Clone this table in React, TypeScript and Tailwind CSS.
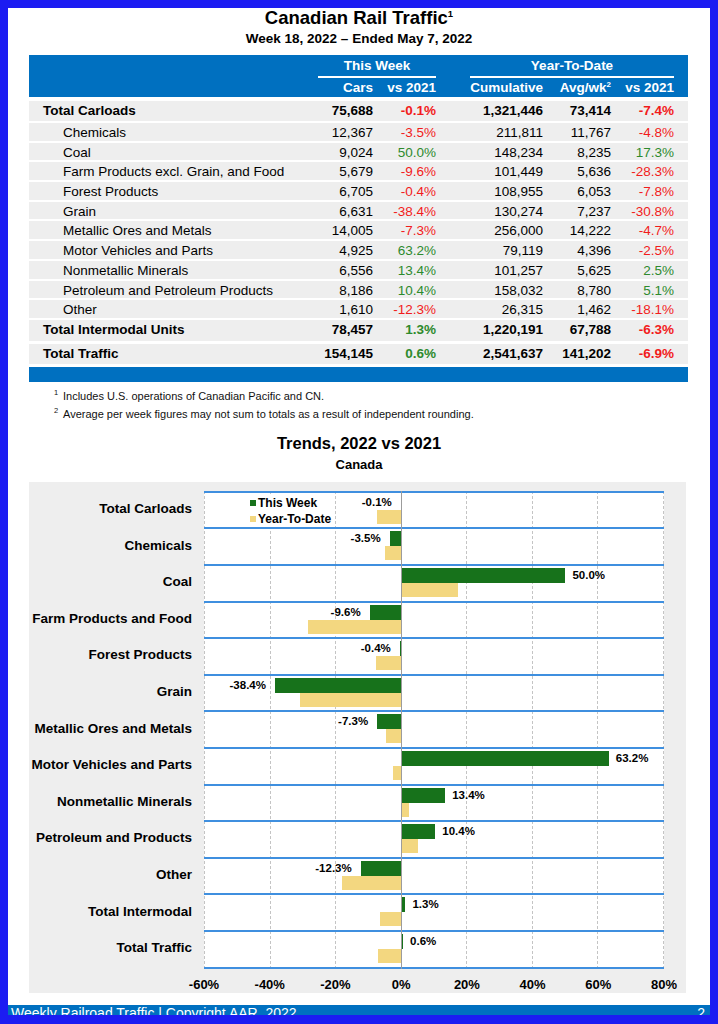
const tableRows = [
  { label: "Total Carloads", cars: "75,688", vs: "-0.1%", cum: "1,321,446", avg: "73,414", ytd: "-7.4%", total: true },
  { label: "Chemicals", cars: "12,367", vs: "-3.5%", cum: "211,811", avg: "11,767", ytd: "-4.8%" },
  { label: "Coal", cars: "9,024", vs: "50.0%", cum: "148,234", avg: "8,235", ytd: "17.3%" },
  { label: "Farm Products excl. Grain, and Food", cars: "5,679", vs: "-9.6%", cum: "101,449", avg: "5,636", ytd: "-28.3%" },
  { label: "Forest Products", cars: "6,705", vs: "-0.4%", cum: "108,955", avg: "6,053", ytd: "-7.8%" },
  { label: "Grain", cars: "6,631", vs: "-38.4%", cum: "130,274", avg: "7,237", ytd: "-30.8%" },
  { label: "Metallic Ores and Metals", cars: "14,005", vs: "-7.3%", cum: "256,000", avg: "14,222", ytd: "-4.7%" },
  { label: "Motor Vehicles and Parts", cars: "4,925", vs: "63.2%", cum: "79,119", avg: "4,396", ytd: "-2.5%" },
  { label: "Nonmetallic Minerals", cars: "6,556", vs: "13.4%", cum: "101,257", avg: "5,625", ytd: "2.5%" },
  { label: "Petroleum and Petroleum Products", cars: "8,186", vs: "10.4%", cum: "158,032", avg: "8,780", ytd: "5.1%" },
  { label: "Other", cars: "1,610", vs: "-12.3%", cum: "26,315", avg: "1,462", ytd: "-18.1%" },
];

const totalRows = [
  { label: "Total Intermodal Units", cars: "78,457", vs: "1.3%", cum: "1,220,191", avg: "67,788", ytd: "-6.3%", total: true },
  { label: "Total Traffic", cars: "154,145", vs: "0.6%", cum: "2,541,637", avg: "141,202", ytd: "-6.9%", total: true },
];

const trends: [string, number, number][] = [
  ["Total Carloads", -0.1, -7.4],
  ["Chemicals", -3.5, -4.8],
  ["Coal", 50.0, 17.3],
  ["Farm Products and Food", -9.6, -28.3],
  ["Forest Products", -0.4, -7.8],
  ["Grain", -38.4, -30.8],
  ["Metallic Ores and Metals", -7.3, -4.7],
  ["Motor Vehicles and Parts", 63.2, -2.5],
  ["Nonmetallic Minerals", 13.4, 2.5],
  ["Petroleum and Products", 10.4, 5.1],
  ["Other", -12.3, -18.1],
  ["Total Intermodal", 1.3, -6.3],
  ["Total Traffic", 0.6, -6.9],
];

const GRID = "grid grid-cols-[289px_55px_63px_34px_73px_68px_63px_15px]";
const PLOT_W = 460;
const SCALE = PLOT_W / 140; // px per percent, -60% .. 80%
const ZERO = 60 * SCALE;

function pctColor(v: string) {
  return v.startsWith("-") ? "text-[#f21b1b]" : "text-[#2d8a2d]";
}

type Row = (typeof tableRows)[number];

function DataRow({ row, height }: { row: Row; height: string }) {
  return (
    <div className={`${GRID} items-center bg-[#eeeeee] ${height} ${row.total ? "font-bold" : ""}`}>
      <div className={row.total ? "pl-[14px]" : "pl-[34px]"}>{row.label}</div>
      <div className="text-right">{row.cars}</div>
      <div className={`text-right ${pctColor(row.vs)}`}>{row.vs}</div>
      <div />
      <div className="text-right">{row.cum}</div>
      <div className="text-right">{row.avg}</div>
      <div className={`text-right ${pctColor(row.ytd)}`}>{row.ytd}</div>
      <div />
    </div>
  );
}

function Bar({ value, top }: { value: number; top: string }) {
  const w = Math.abs(value) * SCALE;
  const left = value >= 0 ? ZERO : ZERO - w;
  return <div className={`absolute ${top}`} style={{ left, width: w }} />;
}

function TrendsChart() {
  return (
    <div className="mt-[8px] ml-[21px] mr-[24px] h-[511px] bg-[#eeeeee] pt-[9px] flex">
      <div className="w-[175px] flex flex-col">
        {trends.map(([label]) => (
          <div key={label} className="h-[36.6px] flex items-center justify-end pr-[12px] text-[13.5px] font-bold">
            {label}
          </div>
        ))}
      </div>
      <div className="w-[460px] flex flex-col">
        <div className="relative bg-white">
          {/* dashed gridlines */}
          <div className="absolute inset-0 flex">
            {[0, 1, 2, 3, 4, 5, 6].map((i) => (
              <div
                key={i}
                className={`flex-1 border-l border-dashed border-[#c4c4c4] ${i === 6 ? "border-r" : ""}`}
              />
            ))}
          </div>

          {trends.map(([label, week, ytd], i) => {
            const w = Math.abs(week) * SCALE;
            return (
              <div
                key={label}
                className={`relative h-[36.6px] border-t-2 border-[#3f8fdf] ${i === trends.length - 1 ? "border-b-2 h-[38.6px]" : ""}`}
              >
                <Bar value={week} top="top-[2px] h-[15px] bg-[#17721b]" />
                <Bar value={ytd} top="top-[17px] h-[14px] bg-[#f3d780]" />
                <div
                  className="absolute top-[2px] leading-[15px] text-[11.5px] font-bold whitespace-nowrap"
                  style={week >= 0 ? { left: ZERO + w + 7 } : { right: PLOT_W - (ZERO - w) + 9 }}
                >
                  {week.toFixed(1)}%
                </div>
              </div>
            );
          })}

          {/* zero axis */}
          <div className="absolute top-0 bottom-0 w-[1.5px] bg-[#9c9c9c]" style={{ left: ZERO - 0.5 }} />

          {/* legend */}
          <div className="absolute left-[46px] top-[4px] bg-white text-[12px] font-bold leading-[16px]">
            <div className="flex items-center gap-[2px]">
              <span className="w-[6px] h-[6px] bg-[#17721b]" />
              This Week
            </div>
            <div className="flex items-center gap-[2px]">
              <span className="w-[6px] h-[6px] bg-[#f3d780]" />
              Year-To-Date
            </div>
          </div>
        </div>

        {/* x axis */}
        <div className="flex -ml-[32.857px] w-[525.71px] pt-[8px]">
          {["-60%", "-40%", "-20%", "0%", "20%", "40%", "60%", "80%"].map((t) => (
            <div key={t} className="flex-1 text-center text-[13px] font-bold leading-[16px]">
              {t}
            </div>
          ))}
        </div>
      </div>
    </div>
  );
}

export default function App() {
  return (
    <div className="w-[718px] h-[1024px] bg-[#1c1cf2] px-[8px] pt-[8px] flex flex-col font-['Liberation_Sans',Arial,sans-serif] text-black overflow-hidden">
      <div className="bg-white h-[997px] flex flex-col shrink-0">
        <div className="h-[20px] text-center text-[18.5px] font-bold leading-[20px]">
          Canadian Rail Traffic<sup className="text-[9.5px] relative top-[-7px] align-baseline">1</sup>
        </div>
        <div className="mt-[2px] text-center text-[13.5px] font-bold leading-[18px]">
          Week 18, 2022 – Ended May 7, 2022
        </div>

        {/* table */}
        <div className="mt-[7px] ml-[21px] mr-[22px] text-[13.5px]">
          <div className="bg-[#0070c0] text-white font-bold">
            <div className={GRID}>
              <div />
              <div className="col-span-2 h-[23px] pt-[1px] leading-[20px] text-center border-b-2 border-white">This Week</div>
              <div />
              <div className="col-span-3 h-[23px] pt-[1px] leading-[20px] text-center border-b-2 border-white">Year-To-Date</div>
              <div />
            </div>
            <div className={`${GRID} h-[19px] leading-[19px]`}>
              <div />
              <div className="text-right">Cars</div>
              <div className="text-right">vs 2021</div>
              <div />
              <div className="text-right">Cumulative</div>
              <div className="text-right">
                Avg/wk<sup className="text-[8px] relative top-[-5px] align-baseline">2</sup>
              </div>
              <div className="text-right">vs 2021</div>
              <div />
            </div>
          </div>

          <div className="mt-[4px] flex flex-col gap-[2px]">
            {tableRows.map((r, i) => (
              <DataRow key={r.label} row={r} height={i === 0 ? "h-[20px]" : "h-[17.7px]"} />
            ))}
            <DataRow row={totalRows[0]} height="h-[21px]" />
            <div className="mt-[1px]">
              <DataRow row={totalRows[1]} height="h-[20px]" />
            </div>
            <div className="mt-[1px] h-[15px] bg-[#0070c0]" />
          </div>
        </div>

        {/* footnotes */}
        <div className="mt-[5px] pl-[46px] text-[11px] leading-[18px] text-[#111]">
          <div className="flex">
            <span className="w-[9px] text-[7.5px] leading-[12px]">1</span>
            <span>Includes U.S. operations of Canadian Pacific and CN.</span>
          </div>
          <div className="flex">
            <span className="w-[9px] text-[7.5px] leading-[12px]">2</span>
            <span>Average per week figures may not sum to totals as a result of independent rounding.</span>
          </div>
        </div>

        <div className="mt-[10px] text-center text-[16.5px] font-bold leading-[20px]">Trends, 2022 vs 2021</div>
        <div className="mt-[3px] text-center text-[13px] font-bold leading-[18px]">Canada</div>

        <TrendsChart />
      </div>

      <div className="h-[10px] shrink-0 bg-[#0070c0] overflow-hidden flex justify-between pl-[3px] pr-[5px] text-white text-[14px] leading-[14px]">
        <span className="mt-[1px]">Weekly Railroad Traffic | Copyright AAR, 2022</span>
        <span className="mt-[1px]">2</span>
      </div>
    </div>
  );
}
